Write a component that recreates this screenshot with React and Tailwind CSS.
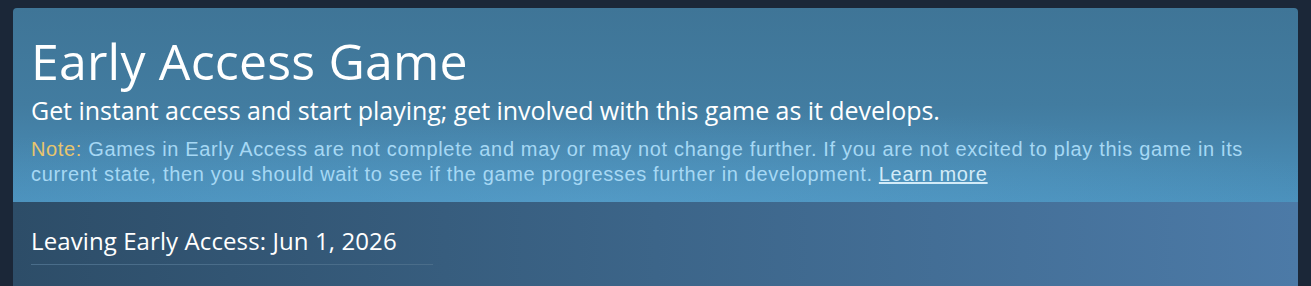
import React from "react";

export default function App() {
  return (
    <div className="w-[1311px] h-[286px] bg-[#1b2738] pt-2 px-[13px] overflow-hidden">
      <div className="rounded-t-[4px] overflow-hidden h-[278px] flex flex-col">
        <div className="relative h-[194px] bg-gradient-to-b from-[#3f7597] via-[#427ca0] to-[#4b91bc] px-[18px] pt-[25px]">
          <div className="absolute inset-0 bg-[radial-gradient(ellipse_60%_50%_at_45%_100%,rgba(96,170,215,0.35),transparent)]" />
          <div className="relative">
            <h1 className="text-white text-[50px] leading-[56px] font-['Open_Sans',sans-serif] tracking-[0.2px]">
              Early Access Game
            </h1>
            <p className="text-white text-[25px] leading-[30px] font-['Open_Sans',sans-serif] mt-[6px] tracking-[-0.05px]">
              Get instant access and start playing; get involved with this game as it develops.
            </p>
            <p className="text-[#a6d8f4] text-[20px] leading-[25px] font-['Liberation_Sans',Arial,sans-serif] tracking-[0.65px] mt-[12px] pr-[20px]">
              <span className="text-[#e8c56d]">Note:</span> Games in Early Access are not complete and may or may
              not change further. If you are not excited to play this game in its current state, then you should
              wait to see if the game progresses further in development.{" "}
              <a className="underline text-[#d2ebf8] cursor-pointer">Learn more</a>
            </p>
          </div>
        </div>
        <div className="flex-1 bg-gradient-to-r from-[#2d4d68] via-[#3c6589] to-[#4c7aa7] px-[18px] pt-[25px]">
          <div className="w-[402px] border-b border-[#4a6d8a] pb-[9px]">
            <span className="block text-white text-[24px] leading-[28px] font-['Open_Sans',sans-serif] tracking-[0.1px]">
              Leaving Early Access: Jun 1, 2026
            </span>
          </div>
        </div>
      </div>
    </div>
  );
}
